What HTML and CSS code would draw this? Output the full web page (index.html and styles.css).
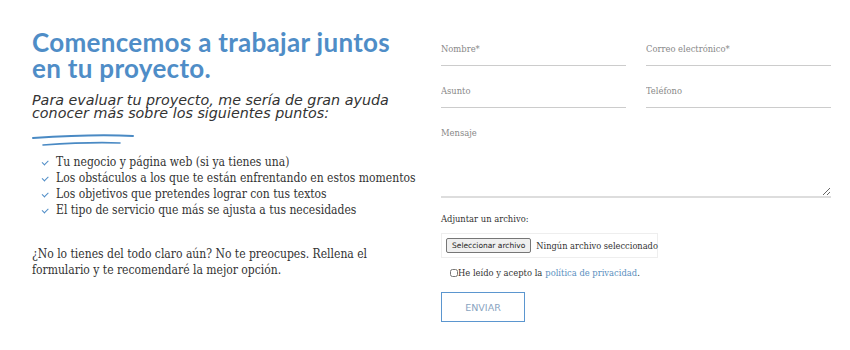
FILE: index.html
```html
<!DOCTYPE html>
<html lang="es">
<head>
  <meta charset="UTF-8">
  <title>Contacto</title>
  <link rel="stylesheet" href="styles.css">
</head>
<body>

<div class="contacto">
  <div class="intro">
    <h2>Comencemos a trabajar juntos en tu proyecto.</h2>
    <p class="lead">Para evaluar tu proyecto, me sería de gran ayuda conocer más sobre los siguientes puntos:</p>
    <svg class="trazo" width="104" height="14" viewBox="0 0 104 14">
      <path d="M1 4 C30 2 70 0 101 2" stroke="#4a8ac4" stroke-width="2" fill="none" stroke-linecap="round"/>
      <path d="M11 11 C40 9 68 8 88 9" stroke="#4a8ac4" stroke-width="1.6" fill="none" stroke-linecap="round"/>
    </svg>
    <ul class="puntos">
      <li>Tu negocio y página web (si ya tienes una)</li>
      <li>Los obstáculos a los que te están enfrentando en estos momentos</li>
      <li>Los objetivos que pretendes lograr con tus textos</li>
      <li>El tipo de servicio que más se ajusta a tus necesidades</li>
    </ul>
    <p class="nota">¿No lo tienes del todo claro aún? No te preocupes. Rellena el formulario y te recomendaré la mejor opción.</p>
  </div>

  <form class="formulario">
    <div class="fila">
      <input type="text" placeholder="Nombre*">
      <input type="email" placeholder="Correo electrónico*">
    </div>
    <div class="fila">
      <input type="text" placeholder="Asunto">
      <input type="tel" placeholder="Teléfono">
    </div>
    <textarea placeholder="Mensaje"></textarea>
    <label class="adjuntar" for="archivo">Adjuntar un archivo:</label>
    <div class="archivo">
      <label class="boton-archivo">Seleccionar archivo<input type="file" id="archivo" hidden></label>
      <span>Ningún archivo seleccionado</span>
    </div>
    <label class="acepto"><input type="checkbox">He leído y acepto la <a href="#">política de privacidad</a>.</label>
    <button type="button">ENVIAR</button>
  </form>
</div>

</body>
</html>
```

FILE: styles.css
```css
* {
  margin: 0;
  padding: 0;
  box-sizing: border-box;
}

body {
  background: #fff;
  color: #333;
  font-family: 'DejaVu Serif Condensed', 'DejaVu Serif', serif;
}

.contacto {
  display: flex;
  gap: 18px;
  padding: 24px 19px 0 32px;
}

.intro {
  width: 391px;
  flex-shrink: 0;
}

.intro h2 {
  font-family: 'Lato', sans-serif;
  font-weight: bold;
  font-size: 26px;
  line-height: 26px;
  letter-spacing: 0.3px;
  color: #4f8dc7;
  width: 362px;
  padding-top: 5px;
}

.lead {
  margin-top: 13px;
  font-family: 'DejaVu Sans', sans-serif;
  font-style: italic;
  font-size: 14.3px;
  line-height: 13px;
  color: #333;
  width: 380px;
}

.trazo {
  display: block;
  margin-top: 14px;
}

.puntos {
  list-style: none;
  margin-top: 6px;
  font-size: 12px;
  line-height: 16px;
  color: #333;
  white-space: nowrap;
}

.puntos li::before {
  content: "";
  display: inline-block;
  width: 5px;
  height: 2.5px;
  border-left: 1.5px solid #4f8dc7;
  border-bottom: 1.5px solid #4f8dc7;
  transform: rotate(-45deg);
  margin: 0 8px 3px 10px;
}

.nota {
  margin-top: 28px;
  font-size: 12px;
  line-height: 16px;
  width: 350px;
}

.formulario {
  flex: 1;
  display: flex;
  flex-direction: column;
}

.fila {
  display: flex;
  gap: 20px;
}

.formulario input[type=text],
.formulario input[type=email],
.formulario input[type=tel],
.formulario textarea {
  flex: 1;
  border: none;
  border-bottom: 1px solid #ccc;
  font-family: inherit;
  font-size: 9.3px;
  padding: 15px 0 8px;
  height: 42px;
  color: #333;
  outline: none;
}

.formulario textarea {
  flex: none;
  height: 90px;
  border-bottom: 2px solid #ddd;
  resize: vertical;
  padding-top: 19px;
}

::placeholder {
  color: #888;
}

.adjuntar {
  margin-top: 15px;
  font-size: 9.3px;
  color: #333;
}

.archivo {
  margin-top: 9px;
  width: 217px;
  height: 25px;
  border: 1px solid #eee;
  padding: 0 4px;
  display: flex;
  align-items: center;
  gap: 5px;
  font-size: 9.2px;
  white-space: nowrap;
}

.boton-archivo {
  font-family: 'DejaVu Sans', sans-serif;
  font-size: 7.5px;
  color: #222;
  background: #efefef;
  border: 1px solid #767676;
  border-radius: 2px;
  padding: 2px 5px;
  cursor: pointer;
}

.acepto {
  margin: 9px 0 0 9px;
  font-size: 9.3px;
  color: #333;
  display: flex;
  align-items: center;
}

.acepto input {
  width: 8px;
  height: 8px;
  margin: 0;
}

.acepto a {
  color: #5a8fc0;
  text-decoration: none;
  margin-left: 3px;
}

button {
  margin-top: 14px;
  width: 84px;
  height: 30px;
  background: #fff;
  border: 1.5px solid #5b96cf;
  color: #8aa4bf;
  font-family: 'DejaVu Sans', sans-serif;
  font-size: 9.5px;
  cursor: pointer;
}
```
